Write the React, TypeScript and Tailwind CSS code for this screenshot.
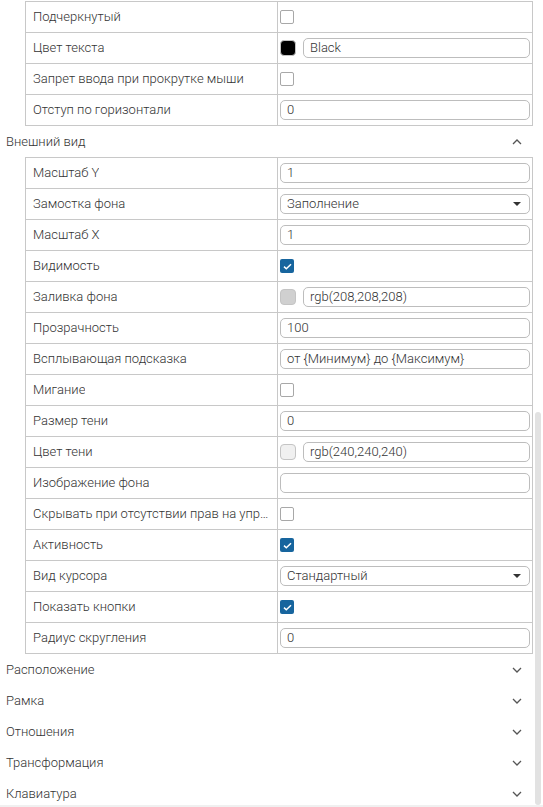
import React from "react";

type Row =
  | { label: string; kind: "check"; checked?: boolean }
  | { label: string; kind: "input"; value: string }
  | { label: string; kind: "select"; value: string }
  | { label: string; kind: "color"; swatch: string; value: string };

const textRows: Row[] = [
  { label: "Подчеркнутый", kind: "check" },
  { label: "Цвет текста", kind: "color", swatch: "#000000", value: "Black" },
  { label: "Запрет ввода при прокрутке мыши", kind: "check" },
  { label: "Отступ по горизонтали", kind: "input", value: "0" },
];

const viewRows: Row[] = [
  { label: "Масштаб Y", kind: "input", value: "1" },
  { label: "Замостка фона", kind: "select", value: "Заполнение" },
  { label: "Масштаб X", kind: "input", value: "1" },
  { label: "Видимость", kind: "check", checked: true },
  { label: "Заливка фона", kind: "color", swatch: "#d0d0d0", value: "rgb(208,208,208)" },
  { label: "Прозрачность", kind: "input", value: "100" },
  { label: "Всплывающая подсказка", kind: "input", value: "от {Минимум} до {Максимум}" },
  { label: "Мигание", kind: "check" },
  { label: "Размер тени", kind: "input", value: "0" },
  { label: "Цвет тени", kind: "color", swatch: "#f0f0f0", value: "rgb(240,240,240)" },
  { label: "Изображение фона", kind: "input", value: "" },
  { label: "Скрывать при отсутствии прав на управление", kind: "check" },
  { label: "Активность", kind: "check", checked: true },
  { label: "Вид курсора", kind: "select", value: "Стандартный" },
  { label: "Показать кнопки", kind: "check", checked: true },
  { label: "Радиус скругления", kind: "input", value: "0" },
];

const collapsed = ["Расположение", "Рамка", "Отношения", "Трансформация", "Клавиатура"];

function Chevron({ up }: { up?: boolean }) {
  return (
    <svg width="10" height="6" viewBox="0 0 10 6" className={up ? "rotate-180" : ""}>
      <path d="M1 1l4 4 4-4" fill="none" stroke="#555" strokeWidth="1.3" />
    </svg>
  );
}

function Checkbox({ checked }: { checked?: boolean }) {
  if (checked) {
    return (
      <div className="w-[14px] h-[14px] rounded-[2px] bg-[#17659e] flex items-center justify-center">
        <svg width="9" height="7" viewBox="0 0 9 7">
          <path d="M1 3.6l2.3 2.2L8 1.2" fill="none" stroke="#fff" strokeWidth="1.5" />
        </svg>
      </div>
    );
  }
  return <div className="w-[14px] h-[14px] rounded-[2px] border border-[#a8a8a8] bg-white" />;
}

function Field({ value, select }: { value: string; select?: boolean }) {
  return (
    <div className="flex-1 min-w-0 h-[20px] rounded-[5px] border border-[#bdbdbd] bg-white flex items-center justify-between pl-[6px] pr-[8px] text-[13px] text-[#333] leading-[18px]">
      <span className="whitespace-nowrap">{value}</span>
      {select && (
        <svg width="8" height="4" viewBox="0 0 8 4" className="shrink-0">
          <path d="M0 0h8L4 4z" fill="#333" />
        </svg>
      )}
    </div>
  );
}

function PropRow({ row }: { row: Row }) {
  return (
    <div className="grid grid-cols-[252px_1fr] h-[31px] border-b border-[#c8c8c8]">
      <div className="border-r border-[#c8c8c8] flex items-center pl-[7px] pr-[4px] min-w-0">
        <span className="truncate leading-[18px] text-[#333]">{row.label}</span>
      </div>
      <div className="flex items-center pl-[2px] pr-[2px] min-w-0">
        {row.kind === "check" && <Checkbox checked={row.checked} />}
        {row.kind === "input" && <Field value={row.value} />}
        {row.kind === "select" && <Field value={row.value} select />}
        {row.kind === "color" && (
          <div className="flex items-center gap-[7px] w-full">
            <div
              className="w-[16px] h-[16px] rounded-[4px] border border-[#c4c4c4] shrink-0"
              style={{ backgroundColor: row.swatch }}
            />
            <Field value={row.value} />
          </div>
        )}
      </div>
    </div>
  );
}

function PropTable({ rows }: { rows: Row[] }) {
  return (
    <div className="ml-[25px] border-l border-r border-t border-[#c8c8c8]">
      {rows.map((r) => (
        <PropRow key={r.label} row={r} />
      ))}
    </div>
  );
}

function SectionHeader({ title, open }: { title: string; open?: boolean }) {
  return (
    <div className="h-[31px] flex items-center justify-between pl-[6px] pr-[11px] text-[#333]">
      <span className="leading-[18px]">{title}</span>
      <Chevron up={open} />
    </div>
  );
}

export default function App() {
  return (
    <div className="relative w-[543px] h-[807px] overflow-hidden bg-white font-['Roboto',sans-serif] font-light text-[13px]">
      <div className="w-[533px] pt-px">
        <PropTable rows={textRows} />
        <SectionHeader title="Внешний вид" open />
        <PropTable rows={viewRows} />
        {collapsed.map((t) => (
          <SectionHeader key={t} title={t} />
        ))}
      </div>
      <div className="absolute left-[535px] top-[412px] w-[6px] h-[393px] rounded-[3px] bg-[#e2e2e2]" />
      <div className="absolute left-0 right-0 bottom-0 h-[2px] bg-[#f0f0f0]" />
    </div>
  );
}
